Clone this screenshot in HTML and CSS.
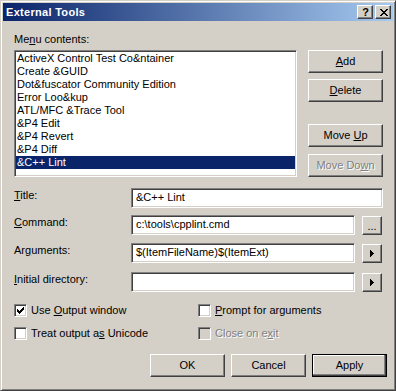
FILE: index.html
```html
<!DOCTYPE html>
<html>
<head>
<meta charset="utf-8">
<title>External Tools</title>
<link rel="stylesheet" href="styles.css">
</head>
<body>
<div class="window">
  <div class="titlebar">
    <span class="title">External Tools</span>
    <div class="caption-btns">
      <span class="cbtn help">?</span>
      <span class="cbtn close">
        <svg width="8" height="7" viewBox="0 0 8 7" shape-rendering="crispEdges">
          <path d="M0 0h2v1h-2z M6 0h2v1h-2z M1 1h2v1h-2z M5 1h2v1h-2z M2 2h4v1h-4z M3 3h2v1h-2z M2 4h4v1h-4z M1 5h2v1h-2z M5 5h2v1h-2z M0 6h2v1h-2z M6 6h2v1h-2z" fill="#000"/>
        </svg>
      </span>
    </div>
  </div>
  <div class="client">
    <div class="label menu-label">Me<u>n</u>u contents:</div>
    <div class="top">
      <div class="listbox">
        <div class="item">ActiveX Control Test Co&amp;ntainer</div>
        <div class="item">Create &amp;GUID</div>
        <div class="item">Dot&amp;fuscator Community Edition</div>
        <div class="item">Error Loo&amp;kup</div>
        <div class="item">ATL/MFC &amp;Trace Tool</div>
        <div class="item">&amp;P4 Edit</div>
        <div class="item">&amp;P4 Revert</div>
        <div class="item">&amp;P4 Diff</div>
        <div class="item selected">&amp;C++ Lint</div>
      </div>
      <div class="side">
        <div class="btn"><span><u>A</u>dd</span></div>
        <div class="btn gap-s"><span><u>D</u>elete</span></div>
        <div class="btn gap-l"><span>Move <u>U</u>p</span></div>
        <div class="btn gap-m disabled"><span>Move Do<u>w</u>n</span></div>
      </div>
    </div>
    <div class="form">
      <div class="row">
        <div class="flabel"><u>T</u>itle:</div>
        <div class="edit">&amp;C++ Lint</div>
      </div>
      <div class="row r2">
        <div class="flabel"><u>C</u>ommand:</div>
        <div class="edit">c:\tools\cpplint.cmd</div>
        <div class="btn small"><span>...</span></div>
      </div>
      <div class="row r3">
        <div class="flabel">Ar<u>g</u>uments:</div>
        <div class="edit">$(ItemFileName)$(ItemExt)</div>
        <div class="btn small">
          <svg width="4" height="7" viewBox="0 0 4 7" shape-rendering="crispEdges"><path d="M0 0h1v7h-1z M1 1h1v5h-1z M2 2h1v3h-1z M3 3h1v1h-1z" fill="#000"/></svg>
        </div>
      </div>
      <div class="row r4">
        <div class="flabel"><u>I</u>nitial directory:</div>
        <div class="edit"></div>
        <div class="btn small">
          <svg width="4" height="7" viewBox="0 0 4 7" shape-rendering="crispEdges"><path d="M0 0h1v7h-1z M1 1h1v5h-1z M2 2h1v3h-1z M3 3h1v1h-1z" fill="#000"/></svg>
        </div>
      </div>
    </div>
    <div class="checks">
      <div class="check">
        <span class="box">
          <svg width="7" height="7" viewBox="0 0 7 7" shape-rendering="crispEdges"><path d="M6 0h1v3h-1z M5 1h1v3h-1z M4 2h1v3h-1z M3 3h1v3h-1z M2 4h1v3h-1z M1 3h1v3h-1z M0 2h1v3h-1z" fill="#000"/></svg>
        </span>
        <span>Use <u>O</u>utput window</span>
      </div>
      <div class="check">
        <span class="box"></span>
        <span><u>P</u>rompt for arguments</span>
      </div>
      <div class="check">
        <span class="box"></span>
        <span>Treat output a<u>s</u> Unicode</span>
      </div>
      <div class="check disabled">
        <span class="box"></span>
        <span>Close on e<u>x</u>it</span>
      </div>
    </div>
    <div class="actions">
      <div class="btn"><span>OK</span></div>
      <div class="btn"><span>Cancel</span></div>
      <div class="btn default"><span>Apply</span></div>
    </div>
  </div>
</div>
</body>
</html>
```

FILE: styles.css
```css
* {
  box-sizing: border-box;
}

html, body {
  margin: 0;
  padding: 0;
}

body {
  width: 396px;
  height: 391px;
  background: #D4D0C8;
  font-family: "Liberation Sans", Arial, sans-serif;
  font-size: 11px;
  line-height: 13px;
  color: #000;
  overflow: hidden;
}

.window {
  width: 396px;
  height: 391px;
  border: 1px solid;
  border-color: #D4D0C8 #404040 #404040 #D4D0C8;
  box-shadow: inset 1px 1px #FFFFFF, inset -1px -1px #808080;
  padding: 2px;
  display: flex;
  flex-direction: column;
  background: #D4D0C8;
}

/* Title bar */
.titlebar {
  height: 18px;
  flex: none;
  background: linear-gradient(to right, #0A246A, #A6CAF0);
  display: flex;
  align-items: center;
  justify-content: space-between;
  padding: 0 2px 0 3px;
}

.title {
  color: #FFFFFF;
  font-weight: bold;
  font-size: 11px;
  line-height: 13px;
  letter-spacing: 0.3px;
}

.caption-btns {
  display: flex;
  gap: 2px;
}

.cbtn {
  width: 16px;
  height: 14px;
  background: #D4D0C8;
  border: 1px solid;
  border-color: #FFFFFF #404040 #404040 #FFFFFF;
  box-shadow: inset -1px -1px #808080;
  display: flex;
  align-items: center;
  justify-content: center;
}

.cbtn.help {
  font-weight: bold;
  font-size: 11px;
  line-height: 11px;
  padding-left: 1px;
}

.cbtn.close svg {
  display: block;
  margin-left: 1px;
}

/* Client area */
.client {
  flex: 1;
  padding: 12px 10px 0 11px;
  display: flex;
  flex-direction: column;
}

.menu-label {
  height: 13px;
}

.top {
  margin-top: 4px;
  display: grid;
  grid-template-columns: 283px 75px;
  column-gap: 11px;
}

.listbox {
  height: 127px;
  background: #FFFFFF;
  border: 1px solid;
  border-color: #808080 #FFFFFF #FFFFFF #808080;
  box-shadow: inset 1px 1px #404040, inset -1px -1px #D4D0C8;
  padding: 1px;
}

.item {
  height: 13px;
  line-height: 13px;
  padding-left: 1px;
  white-space: nowrap;
}

.item.selected {
  background: #0A246A;
  color: #FFFFFF;
}

.side {
  display: flex;
  flex-direction: column;
}

/* Buttons */
.btn {
  width: 75px;
  height: 23px;
  background: #D4D0C8;
  border: 1px solid;
  border-color: #FFFFFF #404040 #404040 #FFFFFF;
  box-shadow: inset -1px -1px #808080;
  display: flex;
  align-items: center;
  justify-content: center;
  padding-bottom: 1px;
  white-space: nowrap;
}

.btn.gap-s {
  margin-top: 6px;
}

.btn.gap-l {
  margin-top: 22px;
}

.btn.gap-m {
  margin-top: 7px;
}

.btn.disabled {
  color: #808080;
  text-shadow: 1px 1px #FFFFFF;
}

.btn.small {
  width: 20px;
  height: 19px;
  flex: none;
  margin-left: 7px;
  margin-right: 1px;
  align-self: center;
  padding-bottom: 0;
}

.btn.small span {
  line-height: 10px;
  padding-top: 2px;
  letter-spacing: 0;
}

.btn.default {
  border: 1px solid #000000;
  box-shadow: inset -1px -1px #404040, inset -2px -2px #808080, inset 1px 1px #FFFFFF;
}

/* Form */
.form {
  margin-top: 11px;
  display: flex;
  flex-direction: column;
}

.row {
  display: flex;
  align-items: flex-start;
}

.row.r2 {
  margin-top: 7px;
}

.row.r3 {
  margin-top: 8px;
}

.row.r4 {
  margin-top: 9px;
}

.flabel {
  width: 117px;
  flex: none;
  margin-top: 1px;
}

.edit {
  flex: 1;
  height: 20px;
  background: #FFFFFF;
  border: 1px solid;
  border-color: #808080 #FFFFFF #FFFFFF #808080;
  box-shadow: inset 1px 1px #404040, inset -1px -1px #D4D0C8;
  padding: 2px 3px 0 4px;
  white-space: nowrap;
  overflow: hidden;
}

/* Checkboxes */
.checks {
  margin-top: 12px;
  display: grid;
  grid-template-columns: 184px 1fr;
  row-gap: 10px;
}

.check {
  display: flex;
  align-items: flex-start;
  gap: 4px;
  height: 13px;
}

.box {
  width: 13px;
  height: 13px;
  flex: none;
  background: #FFFFFF;
  border: 1px solid;
  border-color: #808080 #FFFFFF #FFFFFF #808080;
  box-shadow: inset 1px 1px #404040, inset -1px -1px #D4D0C8;
  display: flex;
  align-items: flex-start;
  justify-content: flex-start;
  padding: 2px 0 0 2px;
}

.box svg {
  display: block;
}

.check.disabled .box {
  background: #D4D0C8;
}

.check.disabled {
  color: #808080;
  text-shadow: 1px 1px #FFFFFF;
}

/* Bottom buttons */
.actions {
  margin-top: 14px;
  margin-right: -4px;
  display: flex;
  justify-content: flex-end;
  gap: 6px;
}
```
